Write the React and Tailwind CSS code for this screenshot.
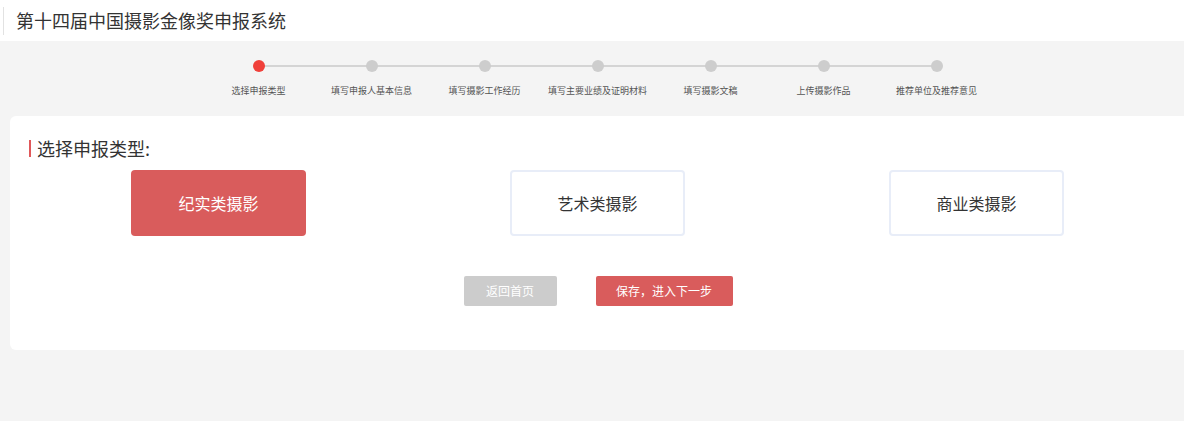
import React, { useState } from 'react';

const steps = ['选择申报类型', '填写申报人基本信息', '填写摄影工作经历', '填写主要业绩及证明材料', '填写摄影文稿', '上传摄影作品', '推荐单位及推荐意见'];
const types = ['纪实类摄影', '艺术类摄影', '商业类摄影'];

const font = { fontFamily: '"Noto Sans CJK SC", "Liberation Sans", sans-serif' };

const App = () => {
  const [active, setActive] = useState(0);

  return (
    <div className="w-[1184px] h-[421px] bg-[#f4f4f4] overflow-hidden" style={font}>
      <div className="h-[41px] bg-white flex items-center pl-[3px]">
        <div className="h-[28px] border-l border-[#e2e2e2] pl-[12px] flex items-center text-[18px] text-[#333]">
          第十四届中国摄影金像奖申报系统
        </div>
      </div>

      <div className="flex pl-[202px] pt-[19px] h-[75px]">
        {steps.map((s, i) => (
          <div key={s} className="w-[113px] flex flex-col items-center relative">
            {i < steps.length - 1 && (
              <div className="absolute top-[5px] left-[56px] w-[113px] h-[2px] bg-[#d4d4d4]" />
            )}
            <div className={`relative w-[12px] h-[12px] rounded-full ${i === 0 ? 'bg-[#f0403a]' : 'bg-[#cdcdcd]'}`} />
            <div className="mt-[12px] text-[9px] text-[#555] whitespace-nowrap">{s}</div>
          </div>
        ))}
      </div>

      <div className="ml-[10px] w-[1180px] h-[234px] bg-white rounded-[6px] pl-[19px] pr-[17px]">
        <div className="pt-[21px] flex items-center gap-[6px]">
          <div className="w-[2px] h-[17px] bg-[#e0585a]" />
          <div className="text-[18px] text-[#333] leading-[22px]">选择申报类型:</div>
        </div>
        <div className="grid grid-cols-[379px_379px_379px] mt-[11px]">
          {types.map((t, i) => (
            <div key={t} className="flex justify-center">
              <button
                onClick={() => setActive(i)}
                className={`w-[175px] h-[66px] rounded-[4px] text-[16px] ${
                  active === i ? 'bg-[#d95c5c] text-white' : 'bg-white text-[#333] border-2 border-[#e8edf8]'
                }`}
              >
                {t}
              </button>
            </div>
          ))}
        </div>
        <div className="flex justify-center gap-[39px] mt-[40px] pr-[6px]">
          <button className="w-[93px] h-[30px] bg-[#cccccc] text-white text-[12px] rounded-[2px]">返回首页</button>
          <button className="w-[137px] h-[30px] bg-[#d95c5c] text-white text-[12px] rounded-[2px]">保存，进入下一步</button>
        </div>
      </div>
    </div>
  );
};

export default App;
